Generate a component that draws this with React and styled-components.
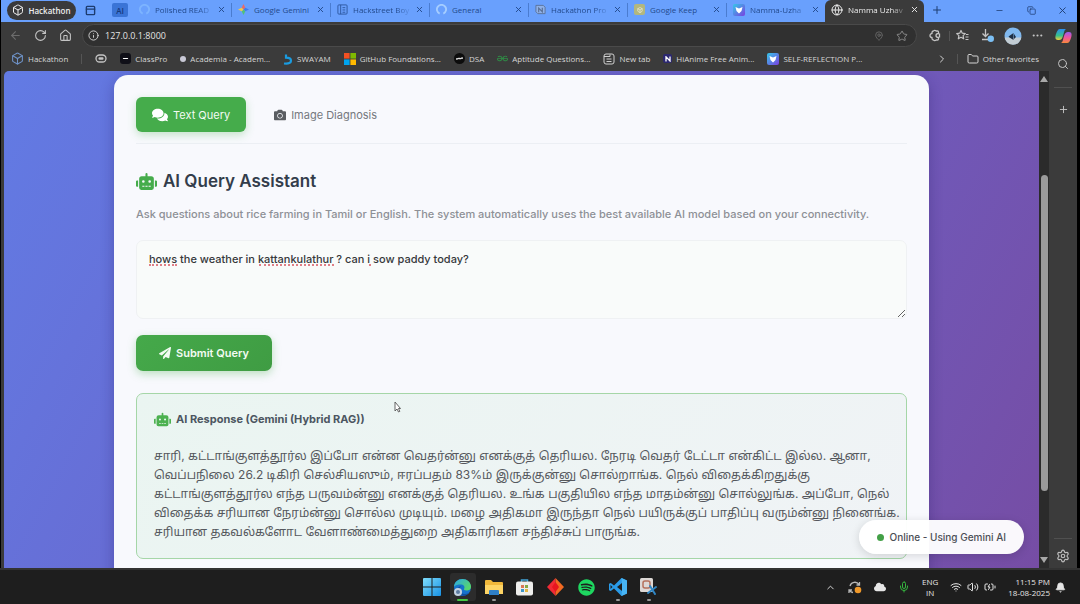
import React from "react";
import styled, { createGlobalStyle, css } from "styled-components";
import { FaComments, FaCamera, FaRobot, FaPaperPlane, FaSpotify, FaCloud } from "react-icons/fa";
import { SiGeeksforgeeks } from "react-icons/si";
import {
  ArrowLeft, RotateCw, House, Info, MapPin, Star, Ellipsis, Search, Plus, Settings, X, Minus, Copy,
  Globe, Folder, ChevronRight, ChevronUp, Mic, Wifi, Volume2, BatteryCharging, Bell,
  PanelTop, Box,
} from "lucide-react";

const ui = '"Open Sans", "Noto Sans", sans-serif';
const body = 'Inter, "Noto Sans", "Noto Sans Tamil", sans-serif';

const GlobalStyle = createGlobalStyle`
  * { box-sizing: border-box; }
  body { margin: 0; background: #000; font-family: ${ui}; }
  button, textarea, input { font: inherit; color: inherit; }
  button { border: 0; background: none; padding: 0; display: inline-flex; align-items: center; justify-content: center; flex: none; }
  a { color: inherit; text-decoration: none; }
  svg { flex: none; display: block; }
`;

const Desktop = styled.div`
  display: flex;
  flex-direction: column;
  height: 100vh;
  overflow: hidden;
`;

const BrowserWindow = styled.div`
  flex: 1;
  min-height: 0;
  display: flex;
  flex-direction: column;
  margin: 0 3px 0 1px;
  background: #3b3b3b;
  color: #d6d6d6;
  font-size: 8px;
`;

/* Tab strip */
const TabStrip = styled.header`
  display: flex;
  align-items: center;
  height: 22px;
  flex: none;
  padding-left: 6px;
  background: #69a0fd;
  color: #234a8c;
`;
const Workspace = styled.button`
  height: 19px;
  width: 69px;
  gap: 4px;
  border-radius: 10px;
  background: #3a3a3c;
  color: #eee;
  font-weight: 600;
  margin-bottom: 2px;
`;
const StripButton = styled.button`
  width: ${(p) => p.$w}px;
  height: 20px;
  margin-bottom: 2px;
  color: #1d3c70;
`;
const GroupTag = styled.button`
  width: 16px;
  height: 14px;
  margin: 0 4px 2px 7px;
  background: #3a74d6;
  color: #16387a;
  border-radius: 2px;
  font-weight: 600;
`;
const TabItem = styled.div`
  display: flex;
  align-items: center;
  gap: 5px;
  flex: 0 1 99px;
  min-width: 0;
  height: 14px;
  padding: 0 5px 0 6px;
  border-left: 1px solid ${(p) => (p.$first ? "transparent" : "#4a7cd0")};
  margin-bottom: 3px;
  ${(p) =>
    p.$active &&
    css`
      height: 22px;
      margin-bottom: 0;
      padding-bottom: 3px;
      border-left: 0;
      border-radius: 6px 6px 0 0;
      background: #3b3b3b;
      color: #ececec;
    `}
`;
const TabTitle = styled.span`
  flex: 1;
  min-width: 0;
  white-space: nowrap;
  line-height: 12px;
  mask-image: ${(p) => (p.$fade ? "linear-gradient(90deg, #000 75%, rgba(0, 0, 0, 0.15))" : "none")};
`;
const Fill = styled.div`
  flex: 1;
`;

/* Toolbar */
const Toolbar = styled.nav`
  display: flex;
  align-items: center;
  height: 28px;
  flex: none;
  padding: 0 0 1px 2px;
`;
const ToolButton = styled.button`
  width: ${(p) => p.$w || 25}px;
  height: 22px;
  color: ${(p) => (p.$dim ? "#6c6c6c" : "#c4c4c4")};
`;
const AddressBar = styled.label`
  flex: 1;
  display: flex;
  align-items: center;
  gap: 6px;
  height: 23px;
  margin: 0 5px 0 4px;
  padding: 0 5px 0 5px;
  border: 1px solid #4a4a4a;
  border-radius: 12px;
  background: #303030;
`;
const AddressInput = styled.input`
  flex: 1;
  min-width: 0;
  border: 0;
  padding: 0;
  outline: 0;
  background: none;
  color: #e4e4e4;
  font-size: 9px;
  line-height: 14px;
`;
const Rule = styled.span`
  width: 1px;
  height: 10px;
  background: #555;
  flex: none;
`;

const WindowBody = styled.div`
  flex: 1;
  min-height: 0;
  display: flex;
`;
const MainColumn = styled.div`
  flex: 1;
  min-width: 0;
  display: flex;
  flex-direction: column;
`;
const Bookmarks = styled.nav`
  display: flex;
  align-items: center;
  gap: 13px;
  height: 21px;
  flex: none;
  padding: 0 10px 4px 10px;
  white-space: nowrap;
`;
const BookmarkEnd = styled.div`
  display: flex;
  align-items: center;
  gap: 9px;
`;
const Bookmark = styled.a`
  display: flex;
  align-items: center;
  gap: 4px;
  line-height: 12px;
`;
const Swatch = styled.span`
  display: flex;
  align-items: center;
  justify-content: center;
  width: ${(p) => p.$size || 11}px;
  height: ${(p) => p.$size || 11}px;
  border-radius: ${(p) => p.$radius || 2}px;
  background: ${(p) => p.$bg};
  color: #fff;
  flex: none;
`;

/* Web page */
const Viewport = styled.div`
  flex: 1;
  min-height: 0;
  display: flex;
  margin-left: 3px;
  border-radius: 5px 0 0 0;
  overflow: hidden;
  font-family: ${body};
`;
const Page = styled.main`
  position: relative;
  flex: 1;
  min-width: 0;
  padding: 4px 110px 0;
  overflow: hidden;
  background: linear-gradient(118deg, #627be4 0%, #6c60c6 55%, #764da4 100%);
`;
const Card = styled.section`
  min-height: 100%;
  padding: 22px 22px 24px;
  border-radius: 14px 14px 0 0;
  background: #f8f9fd;
  color: #333d4b;
  box-shadow: 0 4px 14px rgba(30, 20, 90, 0.3);
`;
const ModeTabs = styled.div`
  display: flex;
  gap: 8px;
  padding-bottom: 11px;
  border-bottom: 1px solid #eceff4;
`;
const ModeTab = styled.button`
  height: 35px;
  gap: 5px;
  padding: 0 ${(p) => (p.$active ? 16 : 20)}px;
  border-radius: 6px;
  font-size: 11px;
  line-height: 16px;
  color: ${(p) => (p.$active ? "#f3fbf3" : "#75787e")};
  background: ${(p) => (p.$active ? "#45ac4b" : "transparent")};
  box-shadow: ${(p) => (p.$active ? "0 3px 8px rgba(76, 175, 80, 0.3)" : "none")};
  svg { color: ${(p) => (p.$active ? "#fff" : "#5a5d62")}; }
`;
const Title = styled.h1`
  display: flex;
  align-items: center;
  gap: 6px;
  margin: 25px 0 0;
  font-size: 17px;
  font-weight: 600;
  line-height: 24px;
  svg { color: #45ac4b; }
`;
const Lead = styled.p`
  margin: 13px 0 18px;
  font-size: 11px;
  font-weight: 500;
  line-height: 16px;
  color: #8d9096;
`;
const QueryField = styled.div`
  position: relative;
  display: flex;
`;
const QueryInput = styled.textarea`
  width: 100%;
  height: 79px;
  padding: 10px 12px;
  border: 1px solid #eff1f3;
  border-radius: 7px;
  outline: 0;
  resize: vertical;
  background: #f9fbfa;
  color: #36383b;
  font-size: 11px;
  font-weight: 500;
  line-height: 16px;
`;
const Misspelling = styled.span`
  position: absolute;
  top: 24px;
  left: ${(p) => p.$x}px;
  width: ${(p) => p.$w}px;
  border-bottom: 2px dotted #d9606a;
  opacity: 0.8;
`;
const SubmitButton = styled.button`
  height: 36px;
  margin-top: 16px;
  padding: 0 23px;
  gap: 5px;
  border-radius: 7px;
  background: linear-gradient(135deg, #45a94a, #3f9c43);
  color: #f3fbf3;
  font-size: 11px;
  font-weight: 600;
  line-height: 16px;
  box-shadow: 0 3px 8px rgba(76, 175, 80, 0.35);
`;
const Response = styled.article`
  margin-top: 22px;
  padding: 16px 17px 17px;
  border: 1px solid #a5d6a7;
  border-radius: 7px;
  background: linear-gradient(135deg, #eaf5f1, #f0f3f6);
`;
const ResponseTitle = styled.h2`
  display: flex;
  align-items: center;
  gap: 5px;
  margin: 0 0 18px;
  font-size: 11px;
  font-weight: 700;
  line-height: 18px;
  color: #4c5661;
  svg { color: #4cb150; }
`;
const Answer = styled.p`
  margin: 0;
  font-size: 12px;
  line-height: 19px;
  color: #55585d;
`;
const Line = styled.span`
  display: block;
  white-space: nowrap;
`;
const Status = styled.div`
  position: absolute;
  right: 15px;
  bottom: 14px;
  display: flex;
  align-items: center;
  gap: 5px;
  height: 34px;
  padding: 0 18px;
  border-radius: 17px;
  background: rgba(255, 255, 255, 0.96);
  color: #4b4e55;
  font-size: 10px;
  font-weight: 500;
  line-height: 16px;
  box-shadow: 0 2px 10px rgba(0, 0, 0, 0.14);
`;
const Pointer = styled.svg`
  position: absolute;
  left: 390px;
  top: 330px;
`;
const Scrollbar = styled.div`
  width: 10px;
  flex: none;
  display: flex;
  flex-direction: column;
  align-items: center;
  padding: 5px 0;
  background: #2b2b2b;
`;
const Part = styled.span`
  flex: ${(p) => p.$share};
  width: 7px;
  border-radius: 4px;
  background: ${(p) => (p.$thumb ? "#9b9b9b" : "transparent")};
`;
const Sidebar = styled.aside`
  width: 28px;
  flex: none;
  display: flex;
  flex-direction: column;
  align-items: center;
  padding: 3px 0 5px;
  color: #bdbdbd;
`;
const SideRule = styled.span`
  width: 18px;
  height: 1px;
  margin: 12px 0 10px;
  background: #505050;
`;

/* Taskbar */
const Taskbar = styled.footer`
  display: grid;
  grid-template-columns: 1fr auto 1fr;
  align-items: center;
  height: 36px;
  flex: none;
  padding: 0 14px;
  border-top: 2px solid #333;
  background: #1e1e1e;
  color: #e6e6e6;
  font-size: 8px;
`;
const Apps = styled.div`
  grid-column: 2;
  display: flex;
  gap: 5px;
`;
const AppButton = styled.button`
  position: relative;
  width: 26px;
  height: 28px;
  border-radius: 3px;
  background: ${(p) => (p.$active ? "#2c2c2c" : "transparent")};
  &::after {
    content: "";
    position: absolute;
    bottom: 0;
    width: ${(p) => (p.$active ? 11 : 4)}px;
    height: 2px;
    border-radius: 1px;
    background: ${(p) => (p.$active ? "#45c945" : p.$open ? "#9a9a9a" : "transparent")};
  }
`;
const Tray = styled.div`
  display: flex;
  align-items: center;
  justify-content: flex-end;
  gap: 12px;
  line-height: 11px;
`;
const TrayGroup = styled.div`
  display: flex;
  align-items: center;
  gap: 5px;
`;
const TrayText = styled.div`
  text-align: ${(p) => p.$align};
  white-space: nowrap;
  div { line-height: 11px; }
`;

const GeminiIcon = () => (
  <svg width="11" height="11" viewBox="0 0 12 12">
    <path d="M6 0 8 4 6 6 4 4Z" fill="#e86a6a" /><path d="M12 6 8 8 6 6 8 4Z" fill="#3f7cf0" />
    <path d="M6 12 4 8 6 6 8 8Z" fill="#4fc07a" /><path d="M0 6 4 4 6 6 4 8Z" fill="#f0c84c" />
  </svg>
);
const RingIcon = ({ color }) => (
  <svg width="11" height="11" viewBox="0 0 12 12" fill="none" stroke={color} strokeWidth="2">
    <path d="M4 10.5A5 5 0 1 1 8 10.5" />
  </svg>
);
const NotionIcon = () => (
  <svg width="11" height="11" viewBox="0 0 12 12" fill="none" stroke="#5b7298">
    <path d="M1 1.5h8l2 2v7H3l-2-2Z" fill="#8fb1e8" /><path d="M4 9V4.500l4 4V4" strokeWidth="1.300" />
  </svg>
);
const PageIcon = () => (
  <svg width="11" height="11" viewBox="0 0 12 12" fill="none" stroke="#2c569e">
    <rect x="1" y="1" width="10" height="10" rx="1" /><path d="M4 1v10M6 4h3M6 6.500h3M6 9h3" />
  </svg>
);
const BoltIcon = () => (
  <svg width="12" height="12" viewBox="0 0 12 12">
    <defs><linearGradient id="shield" x1="0" y1="0" x2="1" y2="1"><stop stopColor="#35c8e8" /><stop offset="1" stopColor="#7a3fe0" /></linearGradient></defs>
    <rect width="12" height="12" rx="2" fill="url(#shield)" /><path d="M2.500 3 6 4.500 9.500 3 8.500 7 6 9.500 3.500 7Z" fill="#fff" />
  </svg>
);
const SwayamIcon = () => (
  <svg width="10" height="12" viewBox="0 0 10 12" fill="none" stroke="#1a9be0" strokeWidth="2.200">
    <path d="M3 1.500v3.200c3 0 5 .8 5 3S6 11 1 10.500" />
  </svg>
);
const MicrosoftIcon = () => (
  <svg width="12" height="12" viewBox="0 0 12 12">
    <path d="M0 0h5.600v5.600H0z" fill="#f25022" /><path d="M6.400 0H12v5.600H6.400z" fill="#7fba00" />
    <path d="M0 6.400h5.600V12H0z" fill="#00a4ef" /><path d="M6.400 6.400H12V12H6.400z" fill="#ffb900" />
  </svg>
);
const WaveIcon = ({ color }) => (
  <svg width="7" height="7" viewBox="0 0 10 10" fill="none" stroke={color} strokeWidth="2">
    <path d="M0 5c2 2 3-1 5 0s3-2 5 0" />
  </svg>
);
const LetterMark = () => (
  <svg width="6" height="6" viewBox="0 0 6 6" fill="none" stroke="#fff" strokeWidth="1.300"><path d="M1 5.500V.8l4 4.200V.5" /></svg>
);
const MaskIcon = () => (
  <svg width="12" height="9" viewBox="0 0 12 9" fill="none" stroke="#c4c4c4" strokeWidth="1.300">
    <rect x="1" y="1" width="10" height="7" rx="3.500" /><rect x="3.500" y="3.200" width="5" height="2.600" rx="1" fill="#c4c4c4" stroke="none" />
  </svg>
);
const NewTabIcon = () => (
  <svg width="12" height="12" viewBox="0 0 12 12" fill="none" stroke="#cfcfcf">
    <rect x="1" y="1" width="10" height="10" rx="2" /><path d="M1 3.500h6v-2M3.500 6h5M3.500 8.500h5" />
  </svg>
);
const ExtensionIcon = () => (
  <svg width="13" height="13" viewBox="0 0 13 13" fill="none" stroke="currentColor" strokeWidth="1.300" strokeLinejoin="round">
    <path d="M9.500 4.500V3a1 1 0 0 0-1-1H7a1.500 1.500 0 0 0-2.500 0C3.500 2 3 2.500 3 3.500V4.500a2 2 0 0 0 0 4V9.500c0 1 .5 1.500 1.500 1.500A1.500 1.500 0 0 0 7 11h1.500a1 1 0 0 0 1-1V8.500c-1.800 0-2.500-.8-2.500-2s.7-2 2.500-2ZM10.500 4.500v4" />
  </svg>
);
const CollectionsIcon = () => (
  <svg width="13" height="13" viewBox="0 0 13 13" fill="none" stroke="currentColor" strokeWidth="1.200" strokeLinejoin="round">
    <path d="m5 1.500 1.300 2.700 3 .4-2.200 2 .6 3.200L5 8.300l-2.700 1.500.6-3.200-2.200-2 3-.4Z" /><path d="M10 5.500h2.500M9.500 8h3M9.500 10.500h3" />
  </svg>
);
const DownloadIcon = () => (
  <svg width="15" height="15" viewBox="0 0 15 15" fill="none" stroke="currentColor" strokeWidth="1.300">
    <path d="M5.500 1v7M2.500 5.500l3 3 3-3M2 11.500h7" /><circle cx="10.800" cy="10.800" r="3.200" fill="#7cc0f5" stroke="none" />
  </svg>
);
const AvatarIcon = () => (
  <svg width="18" height="18" viewBox="0 0 18 18">
    <circle cx="9" cy="9" r="8.500" fill="#80b8ee" />
    <path d="M.6 10.500a8.500 8.500 0 0 0 16.800 0Z" fill="#c3cdd4" />
    <path d="M4.500 9.500 9.500 6v7L5.500 10.500ZM10 7l2 3-2 2Z" fill="#1f3044" />
  </svg>
);
const CopilotIcon = () => (
  <svg width="17" height="16" viewBox="0 0 17 16">
    <defs>
      <linearGradient id="copA" x1="0" y1="0" x2="0" y2="1"><stop stopColor="#2c8cf0" /><stop offset=".6" stopColor="#37c08c" /><stop offset="1" stopColor="#f2cf3a" /></linearGradient>
      <linearGradient id="copB" x1="0" y1="0" x2="0" y2="1"><stop stopColor="#9a5cf0" /><stop offset=".5" stopColor="#f0559c" /><stop offset="1" stopColor="#f78a3c" /></linearGradient>
    </defs>
    <path d="M5 1h6c-2 1-2 4-3 7s-2 4-4 4H3c-3 0-3-3-2-6S3 1 5 1Z" fill="url(#copA)" />
    <path d="M12 15H6c2-1 2-4 3-7s2-4 4-4h1c3 0 3 3 2 6s-2 5-4 5Z" fill="url(#copB)" />
  </svg>
);
const WindowsIcon = () => (
  <svg width="18" height="18" viewBox="0 0 18 18">
    <defs><linearGradient id="win" x1="0" y1="0" x2="1" y2="1"><stop stopColor="#7fdcfb" /><stop offset="1" stopColor="#1892e6" /></linearGradient></defs>
    <path d="M1 0h7.500v8.500H0V1a1 1 0 0 1 1-1ZM9.500 0H17a1 1 0 0 1 1 1v7.500H9.500ZM0 9.500h8.500V18H1a1 1 0 0 1-1-1ZM9.500 9.500H18V17a1 1 0 0 1-1 1H9.500Z" fill="url(#win)" />
  </svg>
);
const EdgeIcon = () => (
  <svg width="19" height="19" viewBox="0 0 19 19">
    <defs><linearGradient id="edge" x1="0" y1="0" x2="1" y2=".6"><stop stopColor="#2aa6ea" /><stop offset="1" stopColor="#58d86a" /></linearGradient></defs>
    <circle cx="9.500" cy="9.500" r="8.500" fill="#1673cc" />
    <path d="M1 9C1 4 5 1 9.500 1S18 4.500 18 8.500c0 3-2 4-4.500 4-2 0-3-1-2.300-2 .8-1.500-.3-4-3.200-4S2 7 1 9Z" fill="url(#edge)" />
    <path d="M7 11c0 4 4 6.500 9 4-2 3-8 3.800-11 .5S6 8 8 8c-1 1-1 2-1 3Z" fill="#124f9c" />
    <circle cx="5" cy="14" r="4" fill="#c4d2e2" /><circle cx="5" cy="14" r="2" fill="#5d7ba0" />
  </svg>
);
const ExplorerIcon = () => (
  <svg width="18" height="17" viewBox="0 0 18 17">
    <path d="M0 2a1 1 0 0 1 1-1h5l2 2h9a1 1 0 0 1 1 1v11H0Z" fill="#f0b73a" /><path d="M0 6h18v9H0Z" fill="#fdd465" />
    <path d="M4 16v-4a1 1 0 0 1 1-1h8a1 1 0 0 1 1 1v4Z" fill="#2f7fc6" />
  </svg>
);
const StoreIcon = () => (
  <svg width="17" height="18" viewBox="0 0 17 18">
    <path d="M5.500 4V2h6v2" fill="none" stroke="#42a3d6" strokeWidth="1.500" /><rect y="3.500" width="17" height="14" rx="2" fill="#eeeeec" />
    <path d="M5 7h3v3H5z" fill="#d97757" /><path d="M9 7h3v3H9z" fill="#86a845" /><path d="M5 11h3v3H5z" fill="#3c95c8" /><path d="M9 11h3v3H9z" fill="#e2b542" />
  </svg>
);
const DiamondIcon = () => (
  <svg width="17" height="18" viewBox="0 0 17 18">
    <path d="M8.500 0v18L0 9Z" fill="#f02a35" /><path d="M8.500 0 17 9l-8.500 9Z" fill="#f26a22" /><path d="M8.500 4 12 9l-3.500 5L5 9Z" fill="#e8151f" />
  </svg>
);
const CodeIcon = () => (
  <svg width="18" height="18" viewBox="0 0 18 18">
    <path d="M12.500 0 18 2.500v13L12.500 18 5 10.500 1.800 13 0 12.200V5.800L1.800 5 5 7.500ZM13 5 8 9l5 4ZM1.500 7v4l2-2Z" fill="#2a9be8" fillRule="evenodd" />
    <path d="M12.500 0 18 2.500v13L12.500 18 13 13V5Z" fill="#48b5f5" />
  </svg>
);
const SnipIcon = () => (
  <svg width="19" height="18" viewBox="0 0 19 18">
    <rect x="1" width="13" height="14" rx="1.500" fill="#ddd8d5" /><rect x="4" y="3" width="7" height="7" rx="2" fill="none" stroke="#b5705c" strokeWidth="1.500" />
    <path d="m9 15 8-6M11 8l5 8" stroke="#2f86c4" strokeWidth="2" strokeLinecap="round" />
  </svg>
);
const SyncIcon = () => (
  <svg width="14" height="13" viewBox="0 0 14 13">
    <g fill="none" stroke="#b8b8b8" strokeWidth="1.300"><path d="M2 5a5 5 0 0 1 9-1.500M11.500 1v3h-3M1 12V9h3M1.500 9.500A5 5 0 0 0 5 11.500" /></g>
    <circle cx="10" cy="9" r="3.300" fill="#f0992a" />
  </svg>
);
const Triangle = ({ down }) => (
  <svg width="8" height="6" viewBox="0 0 8 6"><path d={down ? "M0 0h8L4 6Z" : "M0 6h8L4 0Z"} fill="#a8a8a8" /></svg>
);

const tabs = [
  { title: "Polished READ", icon: <RingIcon color="#7db4ff" />, fade: true },
  { title: "Google Gemini", icon: <GeminiIcon /> },
  { title: "Hackstreet Boy", icon: <PageIcon />, fade: true },
  { title: "General", icon: <RingIcon color="#a5cdff" /> },
  { title: "Hackathon Pro", icon: <NotionIcon />, fade: true },
  { title: "Google Keep", icon: <Swatch $bg="#b3b77e"><Box size={6} /></Swatch> },
  { title: "Namma-Uzha", icon: <BoltIcon />, fade: true },
  { title: "Namma Uzhav", icon: <Globe size={12} />, active: true, fade: true },
];

const bookmarks = [
  { label: "ClassPro", icon: <Swatch $bg="#101018" $radius={3}><Minus size={7} strokeWidth={4} /></Swatch> },
  { label: "Academia - Academ...", icon: <Swatch $bg="#c9c9d6" $size={6} $radius={3} /> },
  { label: "SWAYAM", icon: <SwayamIcon /> },
  { label: "GitHub Foundations...", icon: <MicrosoftIcon /> },
  { label: "DSA", icon: <Swatch $bg="#0c0c0c" $radius={6}><WaveIcon color="#ddd" /></Swatch> },
  { label: "Aptitude Questions...", icon: <SiGeeksforgeeks size={11} color="#2f8d46" /> },
  { label: "New tab", icon: <NewTabIcon /> },
  { label: "HiAnime Free Anim...", icon: <Swatch $bg="#2c2870" $size={9}><LetterMark /></Swatch> },
  { label: "SELF-REFLECTION P...", icon: <BoltIcon /> },
];

const answer = [
  "சாரி, கட்டாங்குளத்தூர்ல இப்போ என்ன வெதர்ன்னு எனக்குத் தெரியல. நேரடி வெதர் டேட்டா என்கிட்ட இல்ல. ஆனா,",
  "வெப்பநிலை 26.2 டிகிரி செல்சியஸும், ஈரப்பதம் 83%ம் இருக்குன்னு சொல்றாங்க. நெல் விதைக்கிறதுக்கு",
  "கட்டாங்குளத்தூர்ல எந்த பருவம்ன்னு எனக்குத் தெரியல. உங்க பகுதியில எந்த மாதம்ன்னு சொல்லுங்க. அப்போ, நெல்",
  "விதைக்க சரியான நேரம்ன்னு சொல்ல முடியும். மழை அதிகமா இருந்தா நெல் பயிருக்குப் பாதிப்பு வரும்ன்னு நினைங்க.",
  "சரியான தகவல்களோட வேளாண்மைத்துறை அதிகாரிகள சந்திச்சுப் பாருங்க.",
];

const misspellings = [{ x: 13, w: 28 }, { x: 123, w: 75 }, { x: 233, w: 3 }];

export default function App() {
  return (
    <Desktop>
      <GlobalStyle />
      <BrowserWindow>
        <TabStrip>
          <Workspace><Box size={12} />Hackathon</Workspace>
          <StripButton $w={29} aria-label="Tab actions"><PanelTop size={11} strokeWidth={3} /></StripButton>
          <GroupTag>AI</GroupTag>
          {tabs.map((t, i) => (
            <TabItem key={t.title} $active={t.active} $first={i === 0}>
              {t.icon}
              <TabTitle $fade={t.fade}>{t.title}</TabTitle>
              <button aria-label="Close tab"><X size={9} strokeWidth={2.5} /></button>
            </TabItem>
          ))}
          <StripButton $w={26} aria-label="New tab"><Plus size={12} /></StripButton>
          <Fill />
          <StripButton $w={32} aria-label="Minimise"><Minus size={9} /></StripButton>
          <StripButton $w={32} aria-label="Restore"><Copy size={9} /></StripButton>
          <StripButton $w={30} aria-label="Close"><X size={11} /></StripButton>
        </TabStrip>

        <Toolbar>
          <ToolButton $dim aria-label="Back"><ArrowLeft size={13} /></ToolButton>
          <ToolButton aria-label="Reload"><RotateCw size={13} /></ToolButton>
          <ToolButton aria-label="Home"><House size={13} /></ToolButton>
          <AddressBar>
            <Info size={11} />
            <AddressInput aria-label="Address" defaultValue="127.0.0.1:8000" />
            <ToolButton $dim $w={16} aria-label="Location"><MapPin size={10} /></ToolButton>
            <ToolButton $w={18} aria-label="Add to favorites"><Star size={12} color="#8a8a8a" /></ToolButton>
          </AddressBar>
          <ToolButton $w={27} aria-label="Extensions"><ExtensionIcon /></ToolButton>
          <Rule />
          <ToolButton aria-label="Favorites"><CollectionsIcon /></ToolButton>
          <ToolButton aria-label="Downloads"><DownloadIcon /></ToolButton>
          <ToolButton aria-label="Profile"><AvatarIcon /></ToolButton>
          <ToolButton aria-label="More"><Ellipsis size={13} /></ToolButton>
          <ToolButton $w={27} aria-label="Copilot"><CopilotIcon /></ToolButton>
        </Toolbar>

        <WindowBody>
          <MainColumn>
            <Bookmarks>
              <Bookmark href="#"><Box size={13} color="#6f93c8" />Hackathon</Bookmark>
              <Rule />
              <MaskIcon />
              {bookmarks.map((b) => (
                <Bookmark href="#" key={b.label}>{b.icon}{b.label}</Bookmark>
              ))}
              <Fill />
              <BookmarkEnd>
                <ChevronRight size={12} />
                <Rule />
                <Bookmark href="#"><Folder size={12} />Other favorites</Bookmark>
              </BookmarkEnd>
            </Bookmarks>

            <Viewport>
              <Page>
                <Card>
                  <ModeTabs>
                    <ModeTab $active><FaComments size={16} />Text Query</ModeTab>
                    <ModeTab><FaCamera size={12} />Image Diagnosis</ModeTab>
                  </ModeTabs>
                  <Title><FaRobot size={21} />AI Query Assistant</Title>
                  <Lead>
                    Ask questions about rice farming in Tamil or English. The system automatically uses the best
                    available AI model based on your connectivity.
                  </Lead>
                  <QueryField>
                    <QueryInput
                      aria-label="Your question"
                      spellCheck={false}
                      defaultValue="hows the weather in kattankulathur ? can i sow paddy today?"
                    />
                    {misspellings.map((m) => <Misspelling key={m.x} $x={m.x} $w={m.w} />)}
                  </QueryField>
                  <SubmitButton><FaPaperPlane size={12} />Submit Query</SubmitButton>
                  <Response>
                    <ResponseTitle><FaRobot size={17} />AI Response (Gemini (Hybrid RAG))</ResponseTitle>
                    <Answer lang="ta">{answer.map((l) => <Line key={l}>{l}</Line>)}</Answer>
                  </Response>
                </Card>
                <Status><Swatch $bg="#43a047" $size={7} $radius={4} />Online - Using Gemini AI</Status>
                <Pointer width="7" height="12" viewBox="0 0 7 12">
                  <path d="M1 1v9l2-2 1.500 3 1.300-.6L4.500 7.500H6.500Z" fill="#fff" stroke="#555" strokeWidth=".9" />
                </Pointer>
              </Page>
              <Scrollbar>
                <Triangle />
                <Part $share={92} /><Part $share={314} $thumb /><Part $share={65} />
                <Triangle down />
              </Scrollbar>
            </Viewport>
          </MainColumn>
          <Sidebar>
            <ToolButton aria-label="Search"><Search size={12} /></ToolButton>
            <SideRule />
            <ToolButton aria-label="Add"><Plus size={11} /></ToolButton>
            <Fill />
            <SideRule />
            <Settings size={14} />
          </Sidebar>
        </WindowBody>
      </BrowserWindow>

      <Taskbar>
        <Apps>
          <AppButton aria-label="Start"><WindowsIcon /></AppButton>
          <AppButton aria-label="Edge" $active><EdgeIcon /></AppButton>
          <AppButton aria-label="File Explorer" $open><ExplorerIcon /></AppButton>
          <AppButton aria-label="Store"><StoreIcon /></AppButton>
          <AppButton aria-label="Diamond"><DiamondIcon /></AppButton>
          <AppButton aria-label="Spotify"><FaSpotify size={17} color="#1ed760" /></AppButton>
          <AppButton aria-label="Code" $open><CodeIcon /></AppButton>
          <AppButton aria-label="Snipping Tool" $open><SnipIcon /></AppButton>
        </Apps>
        <Tray>
          <ChevronUp size={11} />
          <SyncIcon />
          <FaCloud size={12} />
          <Mic size={12} color="#35b53f" />
          <TrayText $align="center"><div>ENG</div><div>IN</div></TrayText>
          <TrayGroup><Wifi size={12} /><Volume2 size={12} /><BatteryCharging size={12} /></TrayGroup>
          <TrayGroup>
            <TrayText $align="right"><div>11:15 PM</div><div>18-08-2025</div></TrayText>
            <Bell size={11} fill="#e6e6e6" />
          </TrayGroup>
        </Tray>
      </Taskbar>
    </Desktop>
  );
}
